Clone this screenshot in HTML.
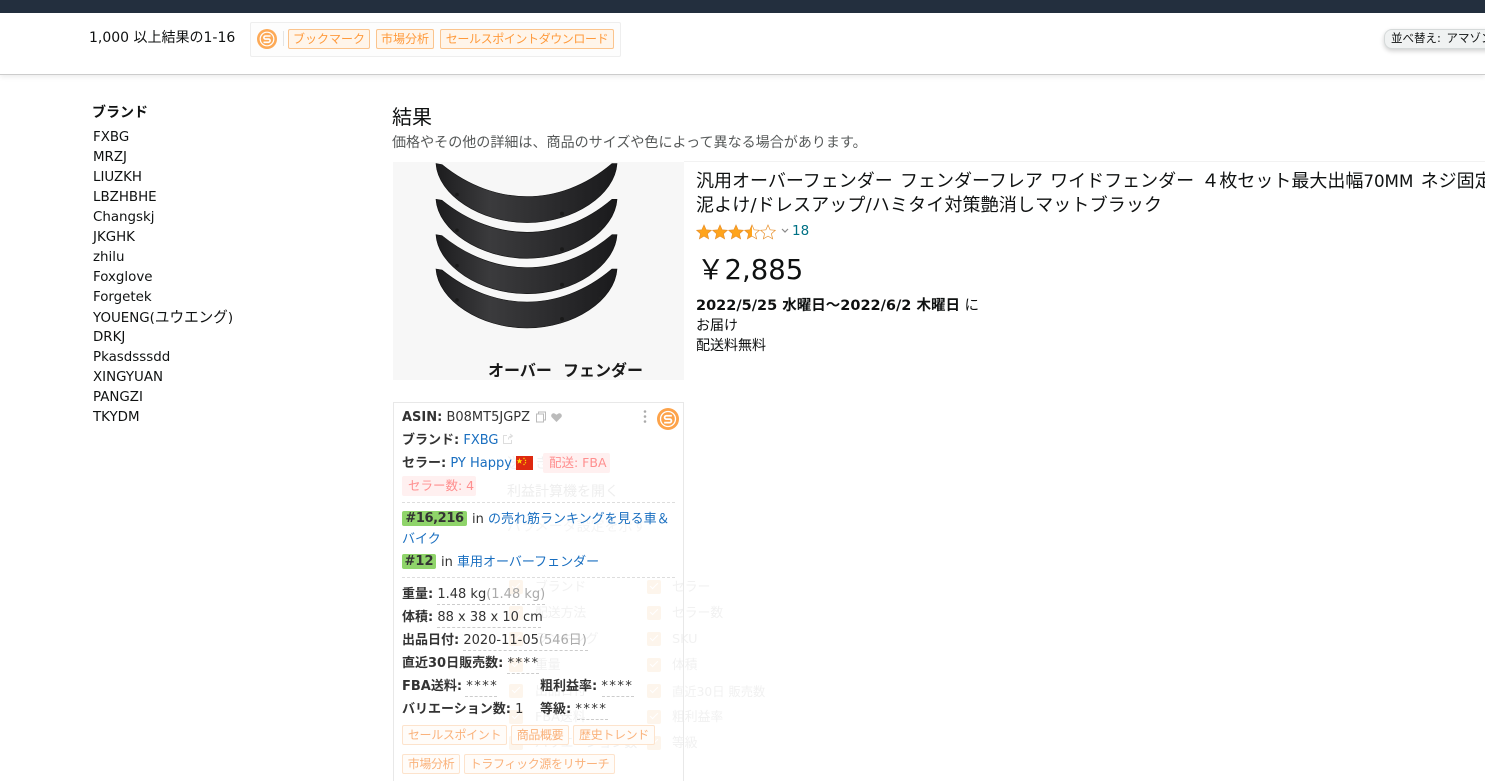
<!DOCTYPE html>
<html lang="ja"><head><meta charset="utf-8"><title>結果</title>
<style>
html,body{margin:0;padding:0;width:1485px;height:781px;overflow:hidden;background:#fff}
body{position:relative;font-family:"DejaVu Sans","Noto Sans CJK JP",sans-serif;color:#0f1111;font-size:14px}
.t{position:absolute;white-space:nowrap;line-height:20px}
.b{font-weight:bold}
.s{font-size:13.4px}
.tag{position:absolute;box-sizing:border-box;height:20px;line-height:18px;border:1px solid #fbc48d;background:#fff5ea;color:#ff9a3c;border-radius:2px;font-size:12px;text-align:center;white-space:nowrap;overflow:hidden}
.p{position:absolute;white-space:nowrap;line-height:20px;font-size:13px;color:#333}
.p b{color:#333}
.p a{color:#1a6fc0}
.g{color:#aaa}
.st{letter-spacing:1.5px}
.tp{position:absolute;box-sizing:border-box;height:20px;line-height:18px;border:1px solid #fde3cc;background:#fffcf9;color:#fab27b;border-radius:2px;font-size:12px;letter-spacing:-.35px;text-align:center;white-space:nowrap;overflow:hidden}
.f{position:absolute;white-space:nowrap;line-height:20px;font-size:12.8px;color:#f1f1f1}
.c{position:absolute;width:14px;height:14px;background:#fdf5ec;border-radius:2px}
.c:after{content:"";position:absolute;left:3px;top:3px;width:7px;height:3px;border-left:1.5px solid #fff;border-bottom:1.5px solid #fff;transform:rotate(-45deg)}
.d{position:absolute;height:0;border-top:1px dashed #ddd}
.u{position:absolute;height:0;border-top:1px dashed #ccc}
.rk{position:absolute;background:#8fd46a;border-radius:2px;height:15px;line-height:15px;font-weight:bold;font-size:13px;color:#333;text-align:center}
</style></head><body>
<div style="position:absolute;left:0;top:0;width:1485px;height:13px;background:#232f3e"></div>
<div style="position:absolute;left:0;top:13px;width:1485px;height:61px;background:#fff;border-bottom:1px solid #ccc;box-shadow:0 2px 5px rgba(15,17,17,.08)"></div>

<div class="t" style="left:89px;top:28px;font-size:14px">1,000 以上結果の1-16</div>
<div style="position:absolute;left:250px;top:22px;width:369px;height:33px;border:1px solid #eee;background:#fdfdfd;border-radius:2px"></div>
<svg style="position:absolute;left:257px;top:29px" width="20" height="20" viewBox="0 0 20 20"><circle cx="10" cy="10" r="10" fill="#fdaa57"/><circle cx="10" cy="10" r="6.800" fill="none" stroke="#fff" stroke-width="1.200"/><path d="M13.500 7H8.500a1.600 1.600 0 0 0-1.600 1.600v.1a1.500 1.500 0 0 0 1.600 1.400h3a1.500 1.500 0 0 1 1.600 1.500v.1a1.600 1.600 0 0 1-1.600 1.600H6.500" fill="none" stroke="#fff" stroke-width="1.600"/></svg>
<div style="position:absolute;left:283px;top:31px;width:1px;height:15px;background:#e5e5e5"></div>
<div class="tag" style="left:288px;top:29px;width:82px">ブックマーク</div>
<div class="tag" style="left:376px;top:29px;width:58px">市場分析</div>
<div class="tag" style="left:440px;top:29px;width:174px;letter-spacing:-.4px">セールスポイントダウンロード</div>

<div style="position:absolute;left:1384px;top:29px;width:120px;height:18px;background:#f0f2f2;border:1px solid #d5d9d9;border-radius:8px;box-shadow:0 2px 5px rgba(15,17,17,.2)"></div>
<div class="t" style="left:1391px;top:28px;font-size:11.500px;word-spacing:2px">並べ替え: アマゾン</div>

<div class="t b" style="left:92px;top:103px;font-size:14px">ブランド</div>
<div class="t s" style="left:93px;top:128px">FXBG</div>
<div class="t s" style="left:93px;top:148px">MRZJ</div>
<div class="t s" style="left:93px;top:168px">LIUZKH</div>
<div class="t s" style="left:93px;top:188px">LBZHBHE</div>
<div class="t s" style="left:93px;top:208px">Changskj</div>
<div class="t s" style="left:93px;top:228px">JKGHK</div>
<div class="t s" style="left:93px;top:248px">zhilu</div>
<div class="t s" style="left:93px;top:268px">Foxglove</div>
<div class="t s" style="left:93px;top:288px">Forgetek</div>
<div class="t s" style="left:93px;top:308px">YOUENG(<span style="font-size:14.6px">ユウエング</span>)</div>
<div class="t s" style="left:93px;top:328px">DRKJ</div>
<div class="t s" style="left:93px;top:348px">Pkasdsssdd</div>
<div class="t s" style="left:93px;top:368px">XINGYUAN</div>
<div class="t s" style="left:93px;top:388px">PANGZI</div>
<div class="t s" style="left:93px;top:408px">TKYDM</div>

<div class="t" style="left:392px;top:104px;font-size:20px;line-height:26px">結果</div>
<div class="t" style="left:392px;top:133px;font-size:14.050px;color:#565959">価格やその他の詳細は、商品のサイズや色によって異なる場合があります。</div>

<div style="position:absolute;left:393px;top:162px;width:291px;height:218px;background:#f7f7f7"></div>
<div style="position:absolute;left:684px;top:161px;width:801px;height:1px;background:#f2f2f2"></div>
<svg style="position:absolute;left:393px;top:162px" width="291" height="218" viewBox="393 162 291 218">
<defs>
<linearGradient id="fg" x1="0" x2="1" y1="0" y2="0"><stop offset="0" stop-color="#1c1c1e"/><stop offset=".3" stop-color="#3b3b3d"/><stop offset=".65" stop-color="#2b2b2d"/><stop offset="1" stop-color="#1a1a1c"/></linearGradient>
<g id="fd"><path fill="url(#fg)" stroke="#111" stroke-width=".6" d="M436 269L442 270C469 292 499 302 527 302C555 302 585 292 612 269L617 269C615 300 574 328 527 328C480 328 438 300 436 269Z"/><circle cx="457" cy="300" r="1.800" fill="#1a1a1a"/><circle cx="562" cy="319" r="2" fill="#1a1a1a"/><circle cx="600" cy="298" r="1.500" fill="#222"/></g>
</defs>
<use href="#fd" y="-105.400"/><use href="#fd" y="-69.700"/><use href="#fd" y="-34.300"/><use href="#fd"/>
</svg>
<div class="t b" style="left:488px;top:361px;font-size:16px;color:#1a1a1a">オーバー</div>
<div class="t b" style="left:563px;top:361px;font-size:16px;color:#1a1a1a">フェンダー</div>

<div class="t" style="left:696px;top:169px;font-size:18px;line-height:24px;width:789px;overflow:hidden;word-spacing:1.500px">汎用オーバーフェンダー フェンダーフレア ワイドフェンダー  ４枚セット最大出幅<span style="font-size:16.700px">70MM</span> ネジ固定式 泥よけ</div>
<div class="t" style="left:696px;top:194px;font-size:18px;line-height:24px;letter-spacing:.15px">泥よけ/ドレスアップ/ハミタイ対策艶消しマットブラック</div>

<svg style="position:absolute;left:696px;top:224px" width="80" height="16" viewBox="0 0 80 16">
<defs><linearGradient id="h"><stop offset=".5" stop-color="#ffa41c"/><stop offset=".5" stop-color="#fff"/></linearGradient>
<path id="sr" d="M8 1l2.100 4.800 5.200.5-3.900 3.400 1.200 5.100L8 12.100l-4.600 2.700 1.200-5.100-3.900-3.400 5.200-.5z"/></defs>
<g stroke="#e8912d" stroke-width=".7"><use href="#sr" fill="#ffa41c"/><use href="#sr" x="16" fill="#ffa41c"/><use href="#sr" x="32" fill="#ffa41c"/><use href="#sr" x="48" fill="url(#h)"/><use href="#sr" x="64" fill="#fff"/></g></svg>
<svg style="position:absolute;left:781px;top:228px" width="8" height="6" viewBox="0 0 8 6"><path d="M1 1l3 3 3-3" fill="none" stroke="#888" stroke-width="1.200"/></svg>
<div class="t" style="left:792px;top:221px;font-size:13.500px;color:#007185">18</div>

<div class="t" style="left:697px;top:253px;font-size:27.500px;line-height:34px">￥2,885</div>
<div class="t" style="left:696px;top:296px;font-size:14.500px"><span class="b">2022/5/25 水曜日～2022/6/2 木曜日</span> に</div>
<div class="t" style="left:696px;top:316px;font-size:14px">お届け</div>
<div class="t" style="left:696px;top:336px;font-size:14px">配送料無料</div>

<!-- faint layer behind the panel -->
<div class="f" style="left:507px;top:454px;font-size:14px">送引き換える</div>
<div class="f" style="left:507px;top:482px;font-size:14px;color:#eee">利益計算機を開く</div>
<div class="f" style="left:507px;top:517px;font-size:14px;color:#f5f5f5">パラメータ設定を示す</div>
<div class="c" style="left:509px;top:580px"></div><div class="c" style="left:647px;top:580px"></div>
<div class="c" style="left:509px;top:606px"></div><div class="c" style="left:647px;top:606px"></div>
<div class="c" style="left:509px;top:632px"></div><div class="c" style="left:647px;top:632px"></div>
<div class="c" style="left:509px;top:658px"></div><div class="c" style="left:647px;top:658px"></div>
<div class="c" style="left:509px;top:684px"></div><div class="c" style="left:647px;top:684px"></div>
<div class="c" style="left:509px;top:710px"></div><div class="c" style="left:647px;top:710px"></div>
<div class="c" style="left:509px;top:736px"></div><div class="c" style="left:647px;top:736px"></div>
<div class="f" style="left:535px;top:578px">ブランド</div><div class="f" style="left:672px;top:578px">セラー</div>
<div class="f" style="left:535px;top:604px">配送方法</div><div class="f" style="left:672px;top:604px">セラー数</div>
<div class="f" style="left:535px;top:630px">ランキング</div><div class="f" style="left:672px;top:630px">SKU</div>
<div class="f" style="left:535px;top:656px">重量</div><div class="f" style="left:672px;top:656px">体積</div>
<div class="f" style="left:535px;top:682px">出品日付</div><div class="f" style="left:672px;top:682px;font-size:12.300px">直近30日 販売数</div>
<div class="f" style="left:535px;top:708px">FBA送料</div><div class="f" style="left:672px;top:708px">粗利益率</div>
<div class="f" style="left:535px;top:734px">バリエーション数</div><div class="f" style="left:672px;top:734px">等級</div>

<!-- panel -->
<div style="position:absolute;left:393px;top:402px;width:289px;height:380px;border:1px solid #e8e8e8;box-sizing:content-box"></div>
<div class="p" style="left:402px;top:408px"><b>ASIN:</b> B08MT5JGPZ</div>
<svg style="position:absolute;left:535px;top:411px" width="28" height="12" viewBox="0 0 28 12"><path d="M3.500 2.500V1h7v8H8.500M1.500 3h7v8h-7z" fill="none" stroke="#bbb"/><path d="M21.500 11l-4.500-4.500c-2.200-2.200.6-5.500 3-3.800l1.500 1 1.500-1c2.400-1.700 5.200 1.600 3 3.800z" fill="#bbb"/></svg>
<svg style="position:absolute;left:643px;top:409px" width="4" height="15" viewBox="0 0 4 15"><circle cx="2" cy="2.500" r="1.300" fill="#aaa"/><circle cx="2" cy="7.500" r="1.300" fill="#aaa"/><circle cx="2" cy="12.500" r="1.300" fill="#aaa"/></svg>
<svg style="position:absolute;left:657px;top:408px" width="22" height="22" viewBox="0 0 20 20"><circle cx="10" cy="10" r="10" fill="#fda34a"/><circle cx="10" cy="10" r="6.800" fill="none" stroke="#fff" stroke-width="1.200"/><path d="M13.500 7H8.500a1.600 1.600 0 0 0-1.600 1.600v.1a1.500 1.500 0 0 0 1.600 1.400h3a1.500 1.500 0 0 1 1.600 1.500v.1a1.600 1.600 0 0 1-1.600 1.600H6.500" fill="none" stroke="#fff" stroke-width="1.600"/></svg>

<div class="p" style="left:402px;top:431px"><b>ブランド:</b> <a>FXBG</a></div>
<svg style="position:absolute;left:502px;top:433px" width="12" height="12" viewBox="0 0 12 12"><path d="M5 2.500H1.500v8h8V7M6.500 6.500c0-2.500 1.500-3.500 3.500-3.500M8 1l2.500 2L8 5" fill="none" stroke="#ddd"/></svg>
<div class="p" style="left:402px;top:454px"><b>セラー:</b> <a>PY Happy</a></div>
<svg style="position:absolute;left:516px;top:456px" width="17" height="14" viewBox="0 0 17 14"><rect width="17" height="14" fill="#de2910"/><path d="M3.500 2l.8 2.200h2.200L4.800 5.500l.6 2.200-1.900-1.300-1.900 1.300.6-2.200L.5 4.200h2.200z" fill="#ffde00"/><circle cx="8" cy="2.500" r=".7" fill="#ffde00"/><circle cx="9.500" cy="4.500" r=".7" fill="#ffde00"/><circle cx="9.500" cy="6.800" r=".7" fill="#ffde00"/><circle cx="8" cy="8.500" r=".7" fill="#ffde00"/></svg>
<div style="position:absolute;left:543px;top:453px;width:67px;height:20px;background:#fff0f0;border-radius:2px"></div>
<div class="p" style="left:549px;top:453px;color:#ff8f8f;font-size:12.500px">配送: FBA</div>
<div style="position:absolute;left:402px;top:476px;width:74px;height:20px;background:#fff0f0;border-radius:2px"></div>
<div class="p" style="left:408px;top:476px;color:#ff8f8f;font-size:12.500px">セラー数: 4</div>
<div class="d" style="left:402px;top:502px;width:273px"></div>

<div class="rk" style="left:402px;top:511px;width:65px;letter-spacing:-.4px">#16,216</div>
<div class="p" style="left:472px;top:510px">in <a>の売れ筋ランキングを見る車＆</a></div>
<div class="p" style="left:402px;top:530px"><a>バイク</a></div>
<div class="rk" style="left:402px;top:554px;width:34px">#12</div>
<div class="p" style="left:441px;top:553px">in <a>車用オーバーフェンダー</a></div>
<div class="d" style="left:402px;top:577px;width:273px"></div>

<div class="p" style="left:402px;top:585px"><b>重量:</b> 1.48 kg<span class="g">(1.48 kg)</span></div>
<div class="u" style="left:437px;top:604px;width:108px"></div>
<div class="p" style="left:402px;top:608px"><b>体積:</b> 88 x 38 x 10 cm</div>
<div class="u" style="left:437px;top:627px;width:104px"></div>
<div class="p" style="left:402px;top:631px"><b>出品日付:</b> 2020-11-05<span class="g">(546日)</span></div>
<div class="u" style="left:463px;top:650px;width:125px"></div>
<div class="p" style="left:402px;top:654px"><b>直近30日販売数:</b> <span class="st">****</span></div>
<div class="u" style="left:507px;top:673px;width:32px"></div>
<div class="p" style="left:402px;top:677px"><b>FBA送料:</b> <span class="st">****</span></div>
<div class="u" style="left:465px;top:696px;width:32px"></div>
<div class="p" style="left:540px;top:677px"><b>粗利益率:</b> <span class="st">****</span></div>
<div class="u" style="left:602px;top:696px;width:32px"></div>
<div class="p" style="left:402px;top:700px"><b>バリエーション数:</b> 1</div>
<div class="p" style="left:540px;top:700px"><b>等級:</b> <span class="st">****</span></div>
<div class="u" style="left:577px;top:719px;width:31px"></div>

<div class="tp" style="left:402px;top:725px;width:105px">セールスポイント</div>
<div class="tp" style="left:511px;top:725px;width:58px">商品概要</div>
<div class="tp" style="left:573px;top:725px;width:82px">歴史トレンド</div>
<div class="tp" style="left:402px;top:754px;width:58px">市場分析</div>
<div class="tp" style="left:464px;top:754px;width:151px">トラフィック源をリサーチ</div>
</body></html>
